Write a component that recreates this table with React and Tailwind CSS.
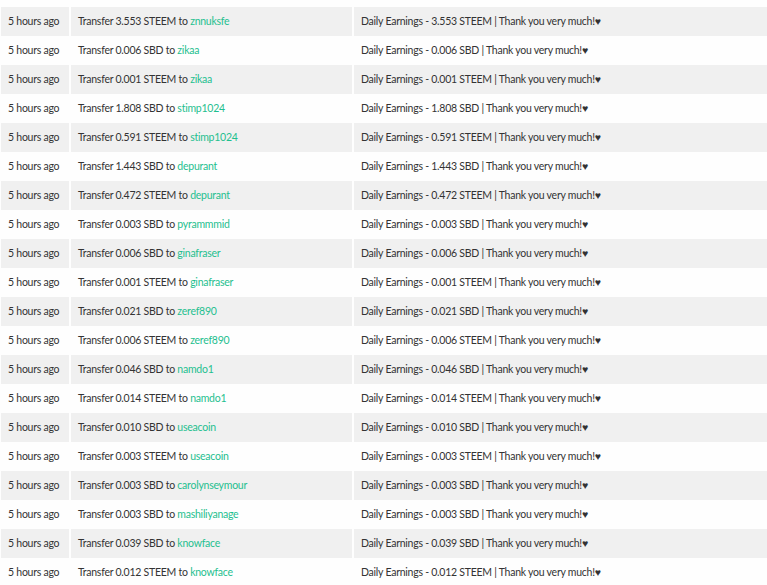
import React from 'react';

const rows = [
  ['3.553', 'STEEM', 'znnuksfe'],
  ['0.006', 'SBD', 'zikaa'],
  ['0.001', 'STEEM', 'zikaa'],
  ['1.808', 'SBD', 'stimp1024'],
  ['0.591', 'STEEM', 'stimp1024'],
  ['1.443', 'SBD', 'depurant'],
  ['0.472', 'STEEM', 'depurant'],
  ['0.003', 'SBD', 'pyrammmid'],
  ['0.006', 'SBD', 'ginafraser'],
  ['0.001', 'STEEM', 'ginafraser'],
  ['0.021', 'SBD', 'zeref890'],
  ['0.006', 'STEEM', 'zeref890'],
  ['0.046', 'SBD', 'namdo1'],
  ['0.014', 'STEEM', 'namdo1'],
  ['0.010', 'SBD', 'useacoin'],
  ['0.003', 'STEEM', 'useacoin'],
  ['0.003', 'SBD', 'carolynseymour'],
  ['0.003', 'SBD', 'mashiliyanage'],
  ['0.039', 'SBD', 'knowface'],
  ['0.012', 'STEEM', 'knowface'],
];

const App = () => {
  return (
    <div className="min-h-screen bg-[#fefefe] pt-[7px] pl-[1px] text-[10.5px] tracking-[-0.25px] text-[#333] overflow-hidden" style={{ fontFamily: 'Lato, "Open Sans", sans-serif' }}>
      {rows.map(([amount, coin, user], i) => {
        const bg = i % 2 === 0 ? 'bg-[#f0f0f0]' : 'bg-transparent';
        return (
          <div key={i} className="flex h-[29px] gap-[2px] w-[790px]">
            <div className={`${bg} w-[68px] px-[7px] flex items-center whitespace-nowrap`}>5 hours ago</div>
            <div className={`${bg} w-[281px] px-[7px] flex items-center whitespace-nowrap`}>
              Transfer {amount} {coin} to&nbsp;<a className="text-[#1fbf8f]">{user}</a>
            </div>
            <div className={`${bg} flex-1 px-[7px] flex items-center whitespace-nowrap`}>
              Daily Earnings - {amount} {coin} | Thank you very much!♥
            </div>
          </div>
        );
      })}
    </div>
  );
};

export default App;
